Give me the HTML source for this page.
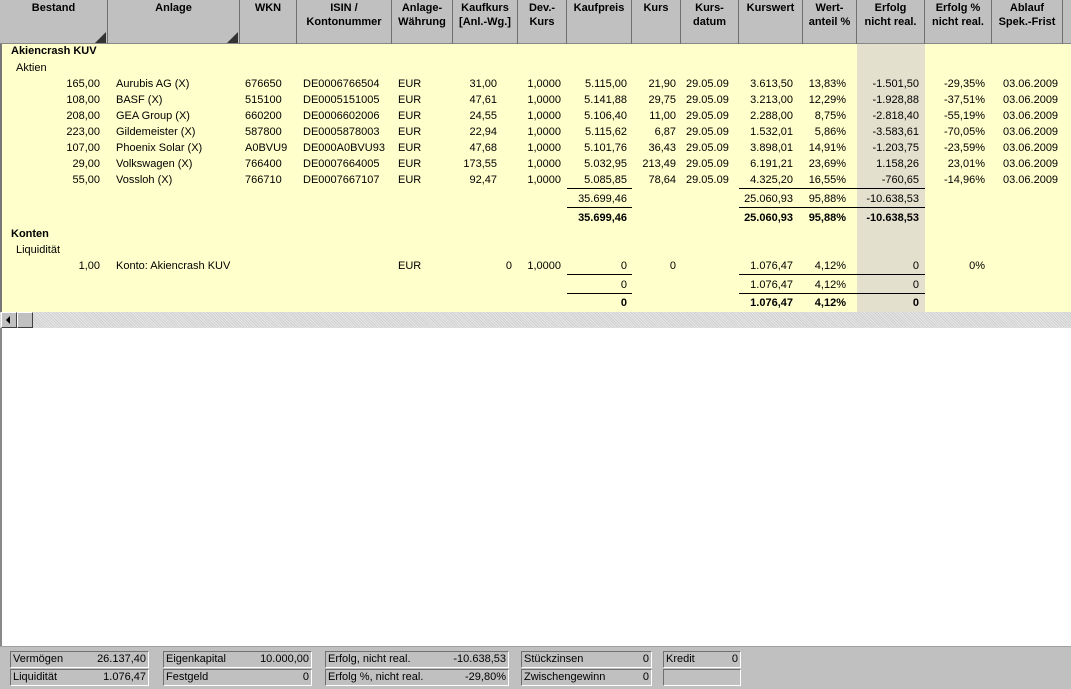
<!DOCTYPE html>
<html><head><meta charset="utf-8"><style>
*{margin:0;padding:0;box-sizing:border-box}
body{width:1071px;height:689px;overflow:hidden;background:#fff;font-family:"Liberation Sans",Arial,sans-serif;font-size:11px;color:#000;position:relative}
.a{position:absolute;white-space:nowrap;line-height:13px}
.r{text-align:right}
.b{font-weight:bold}
#hdr{position:absolute;left:0;top:0;width:1071px;height:44px;background:#c0c0c0;border-bottom:1px solid #888}
.hc{position:absolute;top:0;height:44px;border-right:1px solid #6f6f6f;text-align:center;font-weight:bold;font-size:11px;line-height:14px;padding-top:1px}
.tri{position:absolute;bottom:1px;right:1px;width:0;height:0;border-left:11px solid transparent;border-bottom:11px solid #333}
#body{position:absolute;left:0;top:44px;width:1071px;height:268px;background:#ffffcc;border-left:2px solid #777}
#hl{position:absolute;left:857px;top:44px;width:68px;height:268px;background:#e3e0cd}
.ln{position:absolute;height:1px;background:#000}
#sb{position:absolute;left:0;top:312px;width:1071px;height:16px;background-color:#e6e6e6;background-image:repeating-linear-gradient(45deg,#d0d0d0 0 1px,transparent 1px 2px);border-bottom:1px solid #ddd}
.btn{position:absolute;top:0;width:16px;height:16px;background:#c0c0c0;border:1px solid;border-color:#fff #404040 #404040 #fff}
#pn{position:absolute;left:0;top:646px;width:1071px;height:43px;background:#c0c0c0;border-top:1px solid #a0a0a0}
.bx{position:absolute;height:17px;border:1px solid;border-color:#707070 #fff #fff #707070;background:#c0c0c0;font-size:11px;line-height:15px;padding:0 2px}
.bx span{position:absolute;right:2px;top:0}
</style></head><body>
<div id="hdr">
<div class="hc" style="left:0;width:108px">Bestand<div class="tri"></div></div>
<div class="hc" style="left:108px;width:132px">Anlage<div class="tri"></div></div>
<div class="hc" style="left:240px;width:57px">WKN</div>
<div class="hc" style="left:297px;width:95px">ISIN /<br>Kontonummer</div>
<div class="hc" style="left:392px;width:61px">Anlage-<br>Währung</div>
<div class="hc" style="left:453px;width:65px">Kaufkurs<br>[Anl.-Wg.]</div>
<div class="hc" style="left:518px;width:49px">Dev.-<br>Kurs</div>
<div class="hc" style="left:567px;width:65px">Kaufpreis</div>
<div class="hc" style="left:632px;width:49px">Kurs</div>
<div class="hc" style="left:681px;width:58px">Kurs-<br>datum</div>
<div class="hc" style="left:739px;width:64px">Kurswert</div>
<div class="hc" style="left:803px;width:54px">Wert-<br>anteil %</div>
<div class="hc" style="left:857px;width:68px">Erfolg<br>nicht real.</div>
<div class="hc" style="left:925px;width:67px">Erfolg %<br>nicht real.</div>
<div class="hc" style="left:992px;width:71px">Ablauf<br>Spek.-Frist</div>
</div>
<div id="body"></div>
<div id="hl"></div>

<div class="a b" style="left:11px;top:45px">Akiencrash KUV</div>
<div class="a" style="left:16px;top:62px">Aktien</div>

<div id="rows"></div>
<!-- data rows -->
<div style="position:absolute;left:0;top:78px">
<div class="a r" style="left:40px;width:60px;top:0">165,00</div><div class="a" style="left:116px;top:0">Aurubis AG (X)</div><div class="a" style="left:245px;top:0">676650</div><div class="a" style="left:303px;top:0">DE0006766504</div><div class="a" style="left:398px;top:0">EUR</div><div class="a r" style="left:440px;width:57px;top:0">31,00</div><div class="a r" style="left:510px;width:51px;top:0">1,0000</div><div class="a r" style="left:567px;width:60px;top:0">5.115,00</div><div class="a r" style="left:632px;width:44px;top:0">21,90</div><div class="a" style="left:686px;top:0">29.05.09</div><div class="a r" style="left:739px;width:54px;top:0">3.613,50</div><div class="a r" style="left:795px;width:51px;top:0">13,83%</div><div class="a r" style="left:857px;width:62px;top:0">-1.501,50</div><div class="a r" style="left:925px;width:60px;top:0">-29,35%</div><div class="a" style="left:1003px;top:0">03.06.2009</div>
</div>
<div style="position:absolute;left:0;top:94px">
<div class="a r" style="left:40px;width:60px">108,00</div><div class="a" style="left:116px">BASF (X)</div><div class="a" style="left:245px">515100</div><div class="a" style="left:303px">DE0005151005</div><div class="a" style="left:398px">EUR</div><div class="a r" style="left:440px;width:57px">47,61</div><div class="a r" style="left:510px;width:51px">1,0000</div><div class="a r" style="left:567px;width:60px">5.141,88</div><div class="a r" style="left:632px;width:44px">29,75</div><div class="a" style="left:686px">29.05.09</div><div class="a r" style="left:739px;width:54px">3.213,00</div><div class="a r" style="left:795px;width:51px">12,29%</div><div class="a r" style="left:857px;width:62px">-1.928,88</div><div class="a r" style="left:925px;width:60px">-37,51%</div><div class="a" style="left:1003px">03.06.2009</div>
</div>
<div style="position:absolute;left:0;top:110px">
<div class="a r" style="left:40px;width:60px">208,00</div><div class="a" style="left:116px">GEA Group (X)</div><div class="a" style="left:245px">660200</div><div class="a" style="left:303px">DE0006602006</div><div class="a" style="left:398px">EUR</div><div class="a r" style="left:440px;width:57px">24,55</div><div class="a r" style="left:510px;width:51px">1,0000</div><div class="a r" style="left:567px;width:60px">5.106,40</div><div class="a r" style="left:632px;width:44px">11,00</div><div class="a" style="left:686px">29.05.09</div><div class="a r" style="left:739px;width:54px">2.288,00</div><div class="a r" style="left:795px;width:51px">8,75%</div><div class="a r" style="left:857px;width:62px">-2.818,40</div><div class="a r" style="left:925px;width:60px">-55,19%</div><div class="a" style="left:1003px">03.06.2009</div>
</div>
<div style="position:absolute;left:0;top:126px">
<div class="a r" style="left:40px;width:60px">223,00</div><div class="a" style="left:116px">Gildemeister (X)</div><div class="a" style="left:245px">587800</div><div class="a" style="left:303px">DE0005878003</div><div class="a" style="left:398px">EUR</div><div class="a r" style="left:440px;width:57px">22,94</div><div class="a r" style="left:510px;width:51px">1,0000</div><div class="a r" style="left:567px;width:60px">5.115,62</div><div class="a r" style="left:632px;width:44px">6,87</div><div class="a" style="left:686px">29.05.09</div><div class="a r" style="left:739px;width:54px">1.532,01</div><div class="a r" style="left:795px;width:51px">5,86%</div><div class="a r" style="left:857px;width:62px">-3.583,61</div><div class="a r" style="left:925px;width:60px">-70,05%</div><div class="a" style="left:1003px">03.06.2009</div>
</div>
<div style="position:absolute;left:0;top:142px">
<div class="a r" style="left:40px;width:60px">107,00</div><div class="a" style="left:116px">Phoenix Solar (X)</div><div class="a" style="left:245px">A0BVU9</div><div class="a" style="left:303px">DE000A0BVU93</div><div class="a" style="left:398px">EUR</div><div class="a r" style="left:440px;width:57px">47,68</div><div class="a r" style="left:510px;width:51px">1,0000</div><div class="a r" style="left:567px;width:60px">5.101,76</div><div class="a r" style="left:632px;width:44px">36,43</div><div class="a" style="left:686px">29.05.09</div><div class="a r" style="left:739px;width:54px">3.898,01</div><div class="a r" style="left:795px;width:51px">14,91%</div><div class="a r" style="left:857px;width:62px">-1.203,75</div><div class="a r" style="left:925px;width:60px">-23,59%</div><div class="a" style="left:1003px">03.06.2009</div>
</div>
<div style="position:absolute;left:0;top:158px">
<div class="a r" style="left:40px;width:60px">29,00</div><div class="a" style="left:116px">Volkswagen (X)</div><div class="a" style="left:245px">766400</div><div class="a" style="left:303px">DE0007664005</div><div class="a" style="left:398px">EUR</div><div class="a r" style="left:440px;width:57px">173,55</div><div class="a r" style="left:510px;width:51px">1,0000</div><div class="a r" style="left:567px;width:60px">5.032,95</div><div class="a r" style="left:632px;width:44px">213,49</div><div class="a" style="left:686px">29.05.09</div><div class="a r" style="left:739px;width:54px">6.191,21</div><div class="a r" style="left:795px;width:51px">23,69%</div><div class="a r" style="left:857px;width:62px">1.158,26</div><div class="a r" style="left:925px;width:60px">23,01%</div><div class="a" style="left:1003px">03.06.2009</div>
</div>
<div style="position:absolute;left:0;top:174px">
<div class="a r" style="left:40px;width:60px">55,00</div><div class="a" style="left:116px">Vossloh (X)</div><div class="a" style="left:245px">766710</div><div class="a" style="left:303px">DE0007667107</div><div class="a" style="left:398px">EUR</div><div class="a r" style="left:440px;width:57px">92,47</div><div class="a r" style="left:510px;width:51px">1,0000</div><div class="a r" style="left:567px;width:60px">5.085,85</div><div class="a r" style="left:632px;width:44px">78,64</div><div class="a" style="left:686px">29.05.09</div><div class="a r" style="left:739px;width:54px">4.325,20</div><div class="a r" style="left:795px;width:51px">16,55%</div><div class="a r" style="left:857px;width:62px">-760,65</div><div class="a r" style="left:925px;width:60px">-14,96%</div><div class="a" style="left:1003px">03.06.2009</div>
</div>

<div class="ln" style="left:567px;top:188px;width:65px"></div>
<div class="ln" style="left:739px;top:188px;width:186px"></div>
<div style="position:absolute;left:0;top:193px">
<div class="a r" style="left:567px;width:60px">35.699,46</div><div class="a r" style="left:739px;width:54px">25.060,93</div><div class="a r" style="left:795px;width:51px">95,88%</div><div class="a r" style="left:857px;width:62px">-10.638,53</div>
</div>
<div class="ln" style="left:567px;top:207px;width:65px"></div>
<div class="ln" style="left:739px;top:207px;width:186px"></div>
<div style="position:absolute;left:0;top:212px" class="b">
<div class="a r" style="left:567px;width:60px">35.699,46</div><div class="a r" style="left:739px;width:54px">25.060,93</div><div class="a r" style="left:795px;width:51px">95,88%</div><div class="a r" style="left:857px;width:62px">-10.638,53</div>
</div>

<div class="a b" style="left:11px;top:228px">Konten</div>
<div class="a" style="left:16px;top:244px">Liquidität</div>
<div style="position:absolute;left:0;top:260px">
<div class="a r" style="left:40px;width:60px">1,00</div><div class="a" style="left:116px">Konto: Akiencrash KUV</div><div class="a" style="left:398px">EUR</div><div class="a r" style="left:440px;width:72px">0</div><div class="a r" style="left:510px;width:51px">1,0000</div><div class="a r" style="left:567px;width:60px">0</div><div class="a r" style="left:632px;width:44px">0</div><div class="a r" style="left:739px;width:54px">1.076,47</div><div class="a r" style="left:795px;width:51px">4,12%</div><div class="a r" style="left:857px;width:62px">0</div><div class="a r" style="left:925px;width:60px">0%</div>
</div>
<div class="ln" style="left:567px;top:274px;width:65px"></div>
<div class="ln" style="left:739px;top:274px;width:186px"></div>
<div style="position:absolute;left:0;top:279px">
<div class="a r" style="left:567px;width:60px">0</div><div class="a r" style="left:739px;width:54px">1.076,47</div><div class="a r" style="left:795px;width:51px">4,12%</div><div class="a r" style="left:857px;width:62px">0</div>
</div>
<div class="ln" style="left:567px;top:293px;width:65px"></div>
<div class="ln" style="left:739px;top:293px;width:186px"></div>
<div style="position:absolute;left:0;top:297px" class="b">
<div class="a r" style="left:567px;width:60px">0</div><div class="a r" style="left:739px;width:54px">1.076,47</div><div class="a r" style="left:795px;width:51px">4,12%</div><div class="a r" style="left:857px;width:62px">0</div>
</div>

<div id="sb">
<div class="btn" style="left:1px"><div style="position:absolute;left:4px;top:3px;width:0;height:0;border-top:4px solid transparent;border-bottom:4px solid transparent;border-right:4px solid #000"></div></div>
<div class="btn" style="left:17px"></div>
</div>
<div style="position:absolute;left:0;top:328px;width:2px;height:318px;background:#888"></div>

<div id="pn">
<div class="bx" style="left:10px;top:4px;width:139px">Vermögen<span>26.137,40</span></div>
<div class="bx" style="left:10px;top:22px;width:139px">Liquidität<span>1.076,47</span></div>
<div class="bx" style="left:163px;top:4px;width:149px">Eigenkapital<span>10.000,00</span></div>
<div class="bx" style="left:163px;top:22px;width:149px">Festgeld<span>0</span></div>
<div class="bx" style="left:325px;top:4px;width:184px">Erfolg, nicht real.<span>-10.638,53</span></div>
<div class="bx" style="left:325px;top:22px;width:184px">Erfolg %, nicht real.<span>-29,80%</span></div>
<div class="bx" style="left:521px;top:4px;width:131px">Stückzinsen<span>0</span></div>
<div class="bx" style="left:521px;top:22px;width:131px">Zwischengewinn<span>0</span></div>
<div class="bx" style="left:663px;top:4px;width:78px">Kredit<span>0</span></div>
<div class="bx" style="left:663px;top:22px;width:78px"></div>
</div>
</body></html>
